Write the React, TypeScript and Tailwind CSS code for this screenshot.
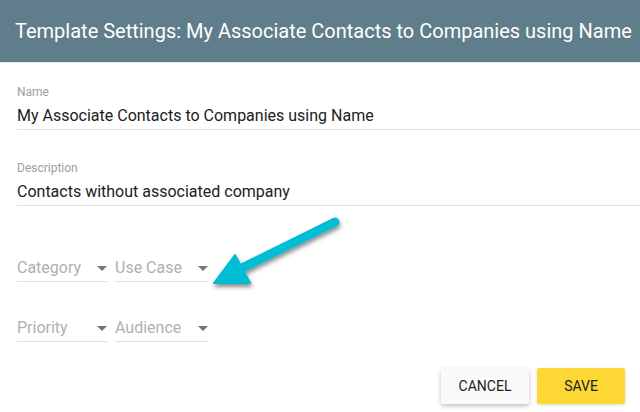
import React from "react";

const Caret = () => (
  <svg width="10" height="5" viewBox="0 0 10 5" className="shrink-0">
    <path d="M0 0h10L5 5z" fill="#757575" />
  </svg>
);

type SelectProps = { placeholder: string; width: string };

const SelectField: React.FC<SelectProps> = ({ placeholder, width }) => (
  <div className={`${width} flex items-center justify-between border-b border-[#e0e0e0] pb-[3px]`}>
    <span className="text-[16px] leading-[20px] text-[#b0b0b0]">{placeholder}</span>
    <Caret />
  </div>
);

type TextFieldProps = { label: string; value: string; className?: string };

const TextField: React.FC<TextFieldProps> = ({ label, value, className }) => (
  <div className={className}>
    <label className="block text-[12px] leading-[14px] text-[#9e9e9e]">{label}</label>
    <div className="mt-[7px] border-b border-[#e0e0e0] pb-[3px] text-[16px] leading-[20px] text-[#212121]">
      {value}
    </div>
  </div>
);

export default function App() {
  return (
    <div
      className="relative h-[412px] w-[640px] overflow-hidden bg-white"
      style={{ fontFamily: "Roboto, 'Liberation Sans', sans-serif" }}
    >
      <header className="flex h-[63px] items-center border-b border-[#e3e7ea] bg-[#607d8b] px-[15px]">
        <h1 className="whitespace-nowrap text-[20px] font-normal text-white">
          Template Settings: My Associate Contacts to Companies using Name
        </h1>
      </header>

      <div className="pl-[17px]">
        <TextField className="mt-[22px]" label="Name" value="My Associate Contacts to Companies using Name" />
        <TextField className="mt-[31px]" label="Description" value="Contacts without associated company" />

        <div className="mt-[52px] flex gap-[8px]">
          <SelectField placeholder="Category" width="w-[90px]" />
          <SelectField placeholder="Use Case" width="w-[93px]" />
        </div>
        <div className="mt-[36px] flex gap-[8px]">
          <SelectField placeholder="Priority" width="w-[90px]" />
          <SelectField placeholder="Audience" width="w-[93px]" />
        </div>
      </div>

      <div className="mt-[26px] flex justify-end gap-[8px] pr-[15px]">
        <button className="h-[36px] w-[88px] rounded-[2px] bg-[#fafafa] text-[14px] font-normal text-[#212121] shadow-[0_2px_4px_rgba(0,0,0,0.25)]">
          CANCEL
        </button>
        <button className="h-[36px] w-[88px] rounded-[2px] bg-[#fdd835] text-[14px] font-normal text-[#212121] shadow-[0_1px_3px_rgba(0,0,0,0.15)]">
          SAVE
        </button>
      </div>

      <svg className="pointer-events-none absolute left-[200px] top-[205px]" width="160" height="100" viewBox="0 0 160 100">
        <defs>
          <filter id="sh" x="-20%" y="-20%" width="140%" height="150%">
            <feDropShadow dx="1" dy="3" stdDeviation="2" floodColor="#000" floodOpacity="0.45" />
          </filter>
        </defs>
        <g filter="url(#sh)">
          <line x1="135" y1="17" x2="40" y2="64" stroke="#00bcd4" strokeWidth="9" strokeLinecap="round" />
          <path d="M14 78 L35 50 L50 78 Z" fill="#00bcd4" stroke="#00bcd4" strokeWidth="2" strokeLinejoin="round" />
        </g>
      </svg>
    </div>
  );
}
